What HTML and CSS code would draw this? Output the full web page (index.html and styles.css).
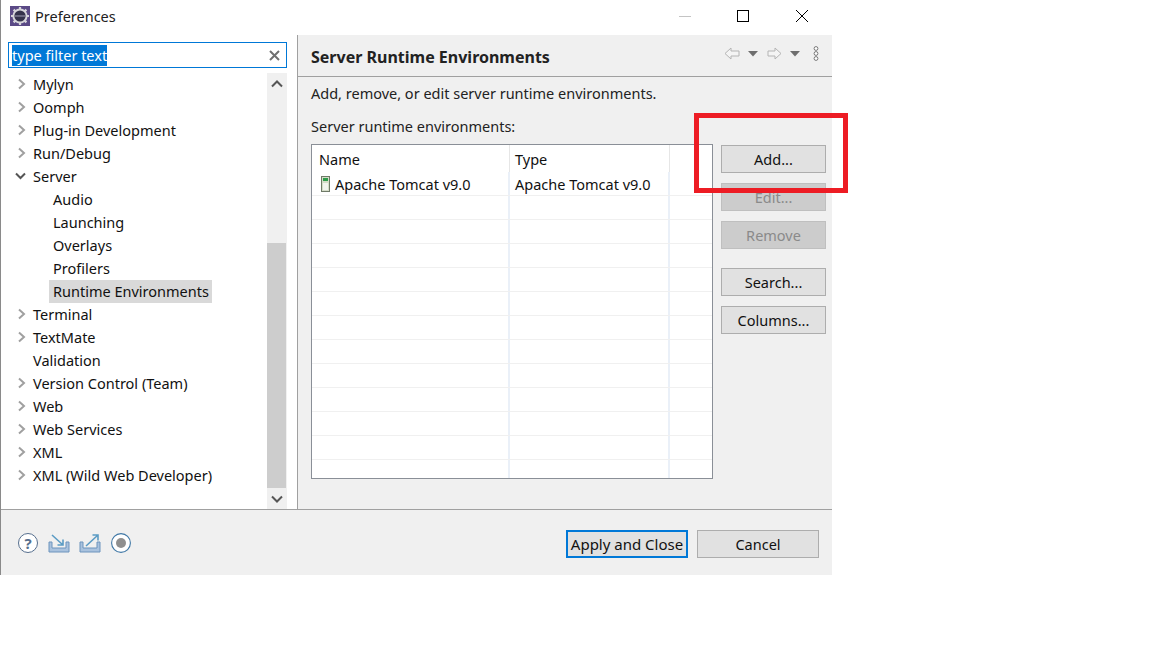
FILE: index.html
```html
<!DOCTYPE html>
<html lang="en">
<head>
<meta charset="utf-8">
<title>Preferences</title>
<link rel="stylesheet" href="styles.css">
</head>
<body>
<div class="window">
  <header class="titlebar">
    <svg class="app-icon" width="20" height="20" viewBox="0 0 20 20">
      <rect width="20" height="20" fill="#5b4a86"/>
      <g stroke="#d6d5da" stroke-width="2.2"><path d="M10 1v18M1 10h18M3.6 3.6l12.8 12.8M16.4 3.6L3.6 16.4"/></g>
      <circle cx="10" cy="10" r="7.6" fill="#d6d5da"/>
      <circle cx="10" cy="10" r="5.6" fill="#34324a"/>
      <rect x="5" y="9.4" width="10" height="1.2" fill="#8f8da3"/>
    </svg>
    <span class="title">Preferences</span>
    <div class="win-controls">
      <svg width="14" height="14" viewBox="0 0 14 14"><path d="M1 7.5h12" stroke="#c4c4c4" stroke-width="1"/></svg>
      <svg class="max" width="14" height="14" viewBox="0 0 14 14"><rect x="1.5" y="1.5" width="11" height="11" fill="none" stroke="#000" stroke-width="1"/></svg>
      <svg width="14" height="14" viewBox="0 0 14 14"><path d="M1 1l12 12M13 1L1 13" stroke="#000" stroke-width="1"/></svg>
    </div>
  </header>
  <div class="main">
    <aside class="left">
      <div class="filter">
        <span class="filter-text">type filter text</span>
        <svg class="filter-clear" width="11" height="11" viewBox="0 0 11 11"><path d="M1 1l9 9M10 1l-9 9" stroke="#6f6f6f" stroke-width="2"/></svg>
      </div>
      <div class="tree-wrap">
        <ul class="tree">
          <li class="row"><svg class="tw" width="9" height="12" viewBox="0 0 9 12"><path d="M2 1.5l5 4.5-5 4.5" fill="none" stroke="#a0a0a0" stroke-width="2"/></svg>Mylyn</li>
          <li class="row"><svg class="tw" width="9" height="12" viewBox="0 0 9 12"><path d="M2 1.5l5 4.5-5 4.5" fill="none" stroke="#a0a0a0" stroke-width="2"/></svg>Oomph</li>
          <li class="row"><svg class="tw" width="9" height="12" viewBox="0 0 9 12"><path d="M2 1.5l5 4.5-5 4.5" fill="none" stroke="#a0a0a0" stroke-width="2"/></svg>Plug-in Development</li>
          <li class="row"><svg class="tw" width="9" height="12" viewBox="0 0 9 12"><path d="M2 1.5l5 4.5-5 4.5" fill="none" stroke="#a0a0a0" stroke-width="2"/></svg>Run/Debug</li>
          <li class="row"><svg class="tw tw-open" width="11" height="12" viewBox="0 0 11 12"><path d="M1 3.5l4.5 4.5L10 3.5" fill="none" stroke="#555" stroke-width="2"/></svg>Server</li>
          <li class="row child">Audio</li>
          <li class="row child">Launching</li>
          <li class="row child">Overlays</li>
          <li class="row child">Profilers</li>
          <li class="row child"><span class="selected">Runtime Environments</span></li>
          <li class="row"><svg class="tw" width="9" height="12" viewBox="0 0 9 12"><path d="M2 1.5l5 4.5-5 4.5" fill="none" stroke="#a0a0a0" stroke-width="2"/></svg>Terminal</li>
          <li class="row"><svg class="tw" width="9" height="12" viewBox="0 0 9 12"><path d="M2 1.5l5 4.5-5 4.5" fill="none" stroke="#a0a0a0" stroke-width="2"/></svg>TextMate</li>
          <li class="row leaf">Validation</li>
          <li class="row"><svg class="tw" width="9" height="12" viewBox="0 0 9 12"><path d="M2 1.5l5 4.5-5 4.5" fill="none" stroke="#a0a0a0" stroke-width="2"/></svg>Version Control (Team)</li>
          <li class="row"><svg class="tw" width="9" height="12" viewBox="0 0 9 12"><path d="M2 1.5l5 4.5-5 4.5" fill="none" stroke="#a0a0a0" stroke-width="2"/></svg>Web</li>
          <li class="row"><svg class="tw" width="9" height="12" viewBox="0 0 9 12"><path d="M2 1.5l5 4.5-5 4.5" fill="none" stroke="#a0a0a0" stroke-width="2"/></svg>Web Services</li>
          <li class="row"><svg class="tw" width="9" height="12" viewBox="0 0 9 12"><path d="M2 1.5l5 4.5-5 4.5" fill="none" stroke="#a0a0a0" stroke-width="2"/></svg>XML</li>
          <li class="row"><svg class="tw" width="9" height="12" viewBox="0 0 9 12"><path d="M2 1.5l5 4.5-5 4.5" fill="none" stroke="#a0a0a0" stroke-width="2"/></svg>XML (Wild Web Developer)</li>
        </ul>
        <div class="scrollbar">
          <div class="sb-btn"><svg width="12" height="8" viewBox="0 0 12 8"><path d="M1 6.5l5-5 5 5" fill="none" stroke="#555" stroke-width="2"/></svg></div>
          <div class="sb-track"><div class="sb-thumb"></div></div>
          <div class="sb-btn"><svg width="12" height="8" viewBox="0 0 12 8"><path d="M1 1.5l5 5 5-5" fill="none" stroke="#555" stroke-width="2"/></svg></div>
        </div>
      </div>
    </aside>
    <section class="right">
      <div class="page-head">
        <h1 class="page-title">Server Runtime Environments</h1>
        <div class="nav-tools">
          <svg width="16" height="13" viewBox="0 0 16 13"><path d="M7 1L1 6.5 7 12V9h8V4H7z" fill="#f4f4f4" stroke="#b4b4b4"/></svg>
          <svg class="drop" width="10" height="6" viewBox="0 0 10 6"><path d="M0 0h10L5 5.5z" fill="#6e6e6e"/></svg>
          <svg class="fwd" width="15" height="13" viewBox="0 0 15 13"><path d="M8 1l6 5.5L8 12V9H1V4h7z" fill="#f4f4f4" stroke="#b4b4b4"/></svg>
          <svg class="drop" width="10" height="6" viewBox="0 0 10 6"><path d="M0 0h10L5 5.5z" fill="#6e6e6e"/></svg>
          <svg class="menu" width="6" height="15" viewBox="0 0 6 15"><g fill="#fff" stroke="#777"><circle cx="3" cy="2.5" r="1.9"/><circle cx="3" cy="7.5" r="1.9"/><circle cx="3" cy="12.5" r="1.9"/></g></svg>
        </div>
      </div>
      <div class="page-body">
        <p class="desc">Add, remove, or edit server runtime environments.</p>
        <p class="label">Server runtime environments:</p>
        <div class="content">
          <div class="table">
            <div class="thead"><div class="c1">Name</div><div class="c2">Type</div><div class="c3"></div></div>
            <div class="trow"><div class="c1"><svg class="srv" width="9" height="16" viewBox="0 0 9 16"><rect x=".5" y=".5" width="8" height="15" fill="#d5dcc8" stroke="#6f7a68"/><rect x="2" y="2" width="5" height="3" fill="#2f9c4a"/><rect x="2" y="7" width="5" height="7" fill="#f2f4ee"/></svg>Apache Tomcat v9.0</div><div class="c2">Apache Tomcat v9.0</div><div class="c3"></div></div>
            <div class="trow"><div class="c1"></div><div class="c2"></div><div class="c3"></div></div>
            <div class="trow"><div class="c1"></div><div class="c2"></div><div class="c3"></div></div>
            <div class="trow"><div class="c1"></div><div class="c2"></div><div class="c3"></div></div>
            <div class="trow"><div class="c1"></div><div class="c2"></div><div class="c3"></div></div>
            <div class="trow"><div class="c1"></div><div class="c2"></div><div class="c3"></div></div>
            <div class="trow"><div class="c1"></div><div class="c2"></div><div class="c3"></div></div>
            <div class="trow"><div class="c1"></div><div class="c2"></div><div class="c3"></div></div>
            <div class="trow"><div class="c1"></div><div class="c2"></div><div class="c3"></div></div>
            <div class="trow"><div class="c1"></div><div class="c2"></div><div class="c3"></div></div>
            <div class="trow"><div class="c1"></div><div class="c2"></div><div class="c3"></div></div>
            <div class="trow"><div class="c1"></div><div class="c2"></div><div class="c3"></div></div>
            <div class="trow"><div class="c1"></div><div class="c2"></div><div class="c3"></div></div>
          </div>
          <div class="side-buttons">
            <button class="btn">Add...</button>
            <button class="btn off">Edit...</button>
            <button class="btn off">Remove</button>
            <button class="btn gap">Search...</button>
            <button class="btn">Columns...</button>
          </div>
        </div>
      </div>
    </section>
  </div>
  <footer class="footer">
    <div class="foot-icons">
      <div class="help">?</div>
      <svg width="22" height="20" viewBox="0 0 22 20"><path d="M1 9h3v6h14V9h3v10H1z" fill="#a9c2de" stroke="#6d94bd"/><path d="M4 2l11 10M15 6.5V12H9.5" fill="none" stroke="#5a9bc4" stroke-width="1.6"/></svg>
      <svg class="export" width="22" height="20" viewBox="0 0 22 20"><path d="M1 9h3v6h14V9h3v10H1z" fill="#a9c2de" stroke="#6d94bd"/><path d="M7 13L19 2M13.5 2H19v5.5" fill="none" stroke="#5a9bc4" stroke-width="1.6"/></svg>
      <svg width="20" height="20" viewBox="0 0 20 20"><circle cx="10" cy="10" r="9.4" fill="#fff" stroke="#3f77a5" stroke-width="1.1"/><circle cx="10" cy="10" r="5" fill="#8f8f8f"/></svg>
    </div>
    <div class="foot-buttons">
      <button class="btn wide default">Apply and Close</button>
      <button class="btn wide">Cancel</button>
    </div>
  </footer>
</div>
<div class="highlight"></div>
</body>
</html>
```
FILE: styles.css
```css
* { box-sizing: border-box; }
html, body { margin: 0; padding: 0; background: #fff; }
body { width: 1152px; height: 648px; overflow: hidden; position: relative; font-family: "Noto Sans", "Open Sans", sans-serif; font-size: 14.5px; color: #111; }
ul, p, h1 { margin: 0; padding: 0; }

.window { width: 832px; height: 575px; display: flex; flex-direction: column; border-left: 1px solid #8a8a8a; }

.titlebar { height: 35px; flex: none; display: flex; align-items: center; padding-left: 9px; background: #fff; padding-bottom: 3px; }
.app-icon { flex: none; }
.title { margin-left: 5px; font-size: 14.5px; color: #222; }
.win-controls { margin-left: auto; display: flex; gap: 44px; padding-right: 23px; }
.max { margin-right: 1px; }

.main { flex: 1; display: flex; min-height: 0; }
.left { width: 297px; flex: none; background: #fff; border-right: 1px solid #a0a0a0; padding: 7px 10px 0 8px; display: flex; flex-direction: column; }
.filter { height: 26px; flex: none; border: 1px solid #0078d7; display: flex; align-items: center; padding: 0 6px 0 3px; margin-left: -1px; }
.filter-text { background: #0078d7; color: #fff; height: 21px; line-height: 21px; display: block; white-space: nowrap; font-size: 14.5px; }
.filter-clear { margin-left: auto; }

.tree-wrap { flex: 1; display: flex; margin-top: 5px; min-height: 0; }
.tree { list-style: none; flex: 1; margin-top: -1px; }
.row { height: 23px; display: flex; align-items: center; padding-left: 24px; position: relative; white-space: nowrap; }
.tw { position: absolute; left: 8px; top: 6px; }
.tw-open { left: 6px; }
.child { padding-left: 42px; margin-left: 2px; }
.selected { background: #d9d9d9; padding: 0 3px 0 4px; margin: 2px 0 0 -4px; height: 23px; line-height: 23px; }

.scrollbar { width: 20px; flex: none; background: #f0f0f0; display: flex; flex-direction: column; }
.sb-btn { height: 21px; flex: none; display: flex; align-items: center; justify-content: center; }
.sb-track { flex: 1; display: flex; flex-direction: column; justify-content: flex-end; }
.sb-thumb { height: 245px; width: 19px; background: #cdcdcd; }

.right { flex: 1; background: #f0f0f0; display: flex; flex-direction: column; min-width: 0; }
.page-head { height: 42px; flex: none; border-bottom: 1px solid #a0a0a0; display: flex; align-items: center; padding: 0 13px 0 13px; }
.page-title { font-size: 16px; font-weight: 700; color: #222; padding-top: 3px; }
.nav-tools { margin-left: auto; display: flex; align-items: center; padding-bottom: 4px; }
.drop { margin-left: 8px; }
.fwd { margin-left: 9px; }
.menu { margin-left: 13px; }

.page-body { flex: 1; padding: 5px 6px 0 13px; min-height: 0; }
.desc { height: 23px; line-height: 23px; color: #222; }
.label { height: 23px; line-height: 23px; margin-top: 10px; color: #222; }
.content { display: flex; margin-top: 6px; }
.table { width: 402px; height: 335px; background: #fff; border: 1px solid #8a8f97; flex: none; overflow: hidden; }
.thead, .trow { display: flex; }
.thead { height: 27px; }
.trow { height: 24px; border-bottom: 1px solid #f0f0f0; }
.c1 { width: 198px; flex: none; border-right: 2px solid #eaf0f8; padding-left: 7px; display: flex; align-items: center; }
.c2 { width: 160px; flex: none; border-right: 2px solid #eaf0f8; padding-left: 5px; display: flex; align-items: center; }
.c3 { flex: 1; }
.thead .c1, .thead .c2 { border-right-color: #e6e6e6; border-right-width: 1px; }
.srv { margin-right: 5px; margin-left: 2px; }

.side-buttons { display: flex; flex-direction: column; gap: 10px; margin-left: 8px; padding-top: 1px; }
.btn { width: 105px; height: 28px; background: #e1e1e1; border: 1px solid #adadad; font: inherit; color: #111; padding: 0; display: block; }
.btn.off { background: #cccccc; border-color: #bfbfbf; color: #8a8a8a; }
.btn.gap { margin-top: 9px; }

.footer { height: 66px; flex: none; background: #f0f0f0; border-top: 1px solid #a0a0a0; display: flex; align-items: flex-start; padding: 20px 13px 0 17px; }
.foot-icons { display: flex; gap: 10px; padding-top: 3px; }
.export { margin-left: -1px; }
.help { width: 20px; height: 20px; flex: none; border: 1px solid #566f8e; border-radius: 50%; background: #fff; color: #566f8e; font-size: 15px; font-weight: 700; line-height: 18px; text-align: center; }
.foot-buttons { margin-left: auto; display: flex; gap: 9px; }
.btn.wide { width: 122px; }
.btn.default { border: 2px solid #0078d7; font-size: 15px; }

.highlight { position: absolute; left: 694px; top: 113px; width: 154px; height: 80px; border: 5px solid #ed1c24; }
```
